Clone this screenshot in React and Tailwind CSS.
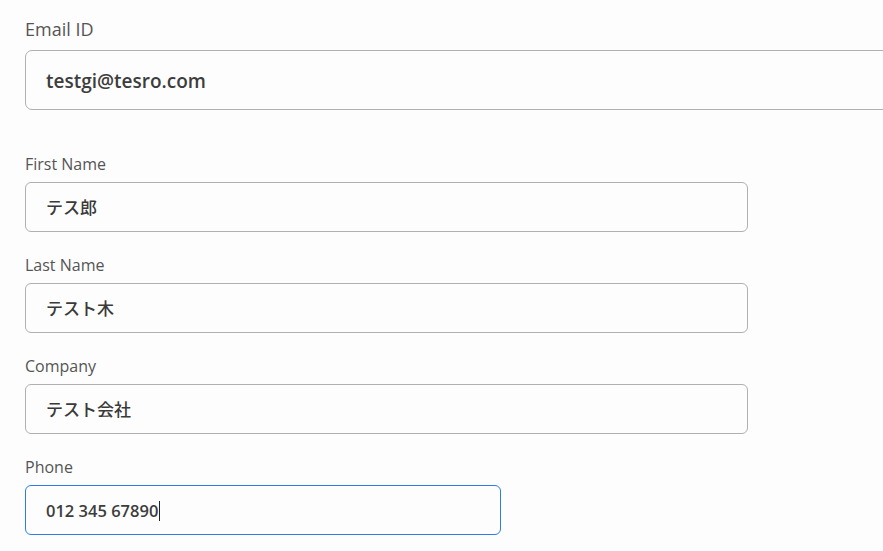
import React from "react";

const fields = [
  { label: "First Name", value: "テス郎" },
  { label: "Last Name", value: "テスト木" },
  { label: "Company", value: "テスト会社" },
];

const font = {
  fontFamily: '"Open Sans", "Noto Sans CJK JP", sans-serif',
};

export default function App() {
  return (
    <div
      className="w-[883px] h-[551px] overflow-hidden bg-[#fdfdfd] pl-[25px] pt-[17px]"
      style={font}
    >
      {/* Email */}
      <div className="text-[18px] leading-[24px] text-[#555]">Email ID</div>
      <div className="mt-[9px] w-[900px] h-[60px] rounded-[7px] border border-[#b0b0b0] flex items-center pl-[20px] pt-[3px] text-[19px] font-semibold text-[#3d3d3d]">
        testgi@tesro.com
      </div>

      <div className="mt-[44px] flex flex-col gap-[23px]">
        {fields.map((f) => (
          <div key={f.label}>
            <div className="text-[16px] leading-[20px] text-[#555]">{f.label}</div>
            <div className="mt-[8px] w-[723px] h-[50px] rounded-[6px] border border-[#b0b0b0] flex items-center pl-[20px] pt-[2px] text-[17px] font-medium text-[#3a3a3a]">
              {f.value}
            </div>
          </div>
        ))}
        <div>
          <div className="text-[16px] leading-[20px] text-[#555]">Phone</div>
          <div className="mt-[8px] w-[476px] h-[50px] rounded-[6px] border border-[#2b7de9] flex items-center pl-[20px] pt-[2px] text-[16.5px] font-semibold text-[#3d3d3d]">
            012 345 67890
            <span className="inline-block w-px h-[20px] bg-[#222] ml-px" />
          </div>
        </div>
      </div>
    </div>
  );
}
